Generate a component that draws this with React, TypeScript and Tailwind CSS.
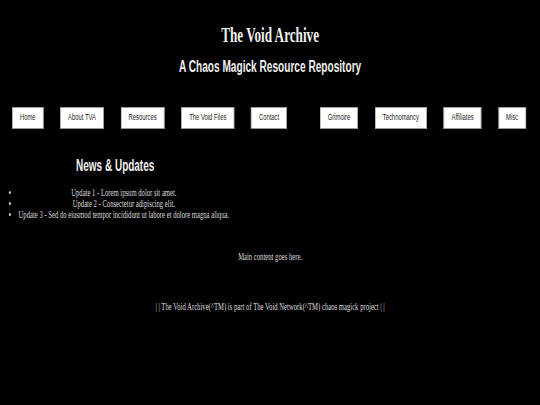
import React from "react";

const leftNav = ["Home", "About TVA", "Resources", "The Void Files", "Contact"];
const rightNav = ["Grimoire", "Technomancy", "Affiliates", "Misc"];

function NavBox({ label }: { label: string }) {
  return (
    <a
      href="#"
      className="flex h-[21.5px] items-center border border-[#9a9a9a] bg-white px-[11.15px] font-['Liberation_Sans',Arial,sans-serif] text-[9.2px] leading-none whitespace-nowrap text-[#222] no-underline"
    >
      {label}
    </a>
  );
}

export default function App() {
  return (
    <div className="h-screen w-full overflow-hidden bg-black">
      <div className="w-[844px] origin-top-left scale-x-[0.64] font-['Liberation_Serif','Times_New_Roman',serif] text-[#dcdcdc]">
        <h1 className="mt-[23px] text-center font-['Liberation_Serif','Times_New_Roman',serif] text-[20.6px] leading-[24px] font-bold text-[#f0f0f0]">
          The Void Archive
        </h1>
        <h2 className="mt-[10px] text-center font-['Liberation_Sans',Arial,sans-serif] text-[15.8px] leading-[20px] font-bold text-[#f0f0f0]">
          A Chaos Magick Resource Repository
        </h2>

        <nav className="mt-[30px] flex pl-[19px]">
          <div className="flex gap-[26.5px]">
            {leftNav.map((l) => (
              <NavBox key={l} label={l} />
            ))}
          </div>
          <div className="ml-[51.5px] flex gap-[26.5px]">
            {rightNav.map((l) => (
              <NavBox key={l} label={l} />
            ))}
          </div>
        </nav>

        <aside className="mt-[27.5px] w-[360px]">
          <h2 className="text-center font-['Liberation_Sans',Arial,sans-serif] text-[15.6px] leading-[20px] font-bold text-[#f0f0f0]">
            News &amp; Updates
          </h2>
          <ul className="mt-[11px] list-disc pl-[27px] text-center text-[10.4px] leading-[11px]">
            <li>Update 1 - Lorem ipsum dolor sit amet.</li>
            <li>Update 2 - Consectetur adipiscing elit.</li>
            <li className="whitespace-nowrap">
              Update 3 - Sed do eiusmod tempor incididunt ut labore et dolore magna aliqua.
            </li>
          </ul>
        </aside>

        <main className="mt-[31px] text-center text-[10.4px] leading-[12px]">
          Main content goes here.
        </main>

        <footer className="mt-[38px] text-center text-[10.45px] leading-[12px]">
          | | The Void Archive(^TM) is part of The Void Network(^TM) chaos magick project | |
        </footer>
      </div>
    </div>
  );
}
